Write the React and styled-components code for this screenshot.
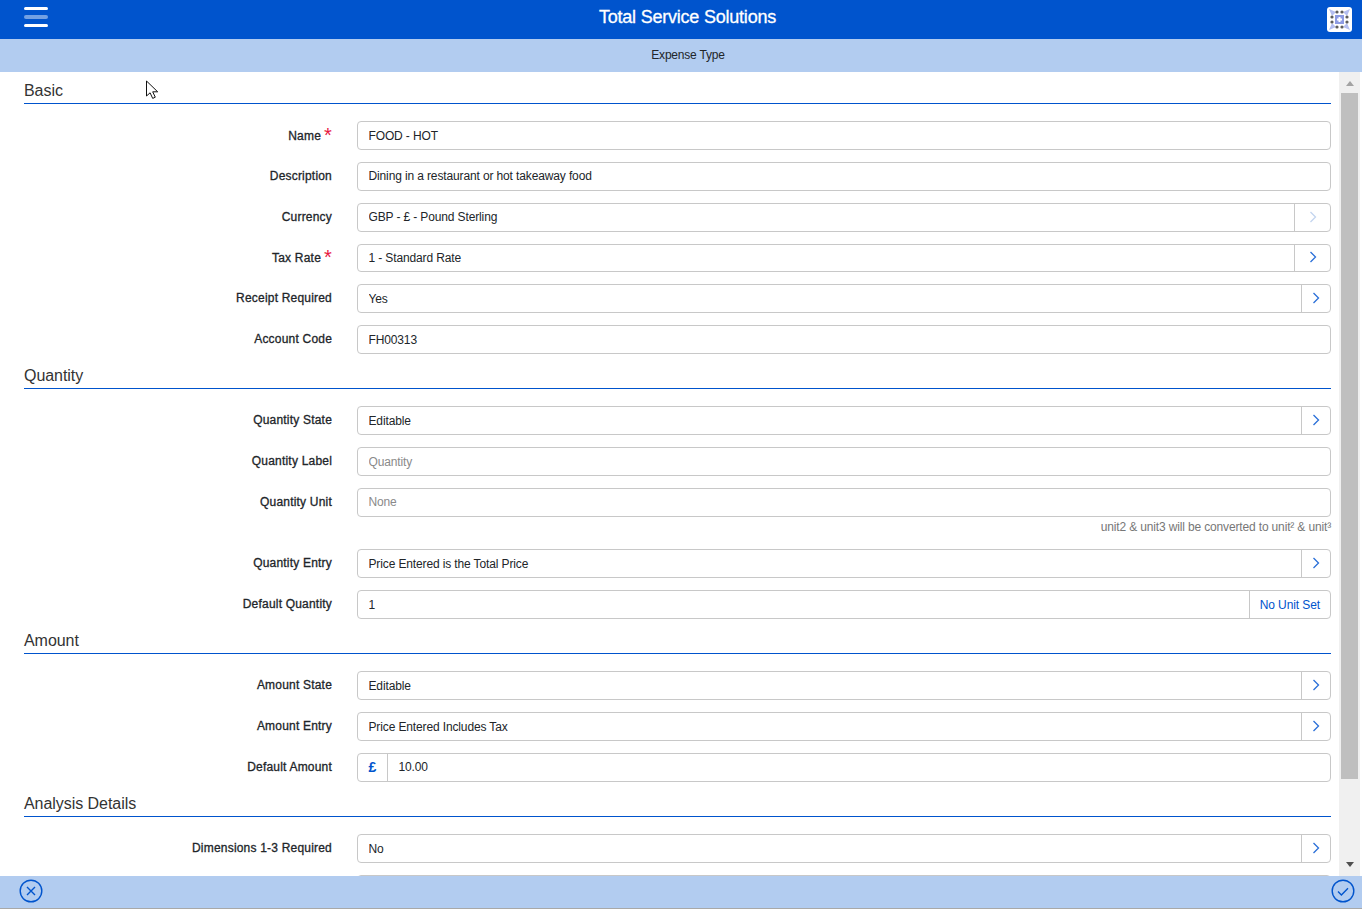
import React from 'react';
import styled, { createGlobalStyle } from 'styled-components';

const BLUE = '#0054cd';
const PALE = '#b2ccf0';

const GlobalStyle = createGlobalStyle`
  html, body {
    margin: 0;
    height: 100%;
    overflow: hidden;
    background: #fff;
  }
  body {
    font-family: "Liberation Sans", Arial, sans-serif;
    font-size: 12px;
    color: #212529;
  }
`;

const Page = styled.div`
  position: relative;
  display: flex;
  flex-direction: column;
  height: 910px;
  padding-bottom: 1px;
  box-sizing: border-box;
`;

const Header = styled.header`
  display: flex;
  align-items: center;
  flex: 0 0 39px;
  padding: 0 10px 5px 24px;
  box-sizing: border-box;
  background: ${BLUE};
`;

const Burger = styled.div`
  display: flex;
  flex-direction: column;
  gap: 5px;
  width: 24px;
`;

const BurgerBar = styled.span`
  height: 3.4px;
  border-radius: 2px;
  background: #fff;
  opacity: ${p => (p.$dim ? 0.45 : 1)};
`;

const Title = styled.h1`
  flex: 1;
  margin: 0;
  color: #fff;
  font-size: 18px;
  font-weight: 400;
  line-height: 34px;
  text-align: center;
  letter-spacing: -0.22px;
  -webkit-text-stroke: 0.3px #fff;
`;

const LogoBox = styled.div`
  display: flex;
  align-items: center;
  justify-content: center;
  width: 25px;
  height: 25px;
  margin-top: 5px;
  border-radius: 3px;
  background: #fff;
`;

const SubHeader = styled.div`
  flex: 0 0 33px;
  padding-left: 14px;
  background: ${PALE};
  font-size: 12px;
  line-height: 32px;
  text-align: center;
  letter-spacing: -0.2px;
`;

const Middle = styled.div`
  display: flex;
  flex: 1;
  min-height: 0;
`;

const Content = styled.main`
  flex: 1;
  min-width: 0;
  overflow: hidden;
  padding: 8.8px 8px 0 24px;
`;

const Scrollbar = styled.div`
  display: flex;
  flex-direction: column;
  align-items: center;
  flex: 0 0 21px;
  margin-right: 2px;
  background: #f0f0f0;
`;

const ScrollArrow = styled.div`
  flex: 0 0 0;
  width: 0;
  height: 0;
  margin-top: 9px;
  border-left: 4.5px solid transparent;
  border-right: 4.5px solid transparent;
  border-${p => (p.$down ? 'top' : 'bottom')}: 5px solid ${p => (p.$down ? '#505050' : '#a3a3a3')};
`;

const ScrollThumb = styled.div`
  width: 17px;
  height: 686px;
  margin-top: 7px;
  background: #bfbfbf;
`;

const ScrollRest = styled.div`
  flex: 1;
`;

const ScrollEnd = styled.div`
  flex: 0 0 9px;
`;

const Section = styled.section`
  margin-bottom: 12px;
`;

const SectionTitle = styled.h2`
  margin: 0 0 17.2px;
  padding-bottom: 1.5px;
  border-bottom: 1px solid ${BLUE};
  color: #333;
  font-size: 16px;
  font-weight: 400;
  line-height: 20.7px;
  letter-spacing: -0.05px;
`;

const Row = styled.div`
  display: grid;
  grid-template-columns: 308px 1fr;
  column-gap: 25px;
  margin-bottom: 12px;
`;

const Label = styled.label`
  display: flex;
  align-items: center;
  justify-content: flex-end;
  height: 28.8px;
  padding: ${p => (p.$required ? '1px 0 0' : '0 0 1px')};
  box-sizing: border-box;
  color: #212529;
  letter-spacing: 0.2px;
  -webkit-text-stroke: 0.3px #212529;
`;

const Star = styled.span`
  margin: -2px 0 0 3px;
  color: #e8173f;
  font-size: 20px;
  line-height: 16px;
  -webkit-text-stroke: 0;
`;

const InputGroup = styled.div`
  display: flex;
  height: 28.8px;
  box-sizing: border-box;
  border: 1px solid #c8c8c8;
  border-radius: 4px;
  background: #fff;
`;

const Input = styled.input`
  flex: 1;
  min-width: 0;
  padding: 0 10px 0 10.5px;
  border: 0;
  outline: 0;
  background: transparent;
  font: inherit;
  letter-spacing: -0.13px;
  color: #212529;
  &::placeholder {
    color: #8a8a8a;
    opacity: 1;
  }
`;

const Append = styled.div`
  display: flex;
  align-items: center;
  justify-content: center;
  flex: 0 0 ${p => p.$width || 29}px;
  box-sizing: border-box;
  border-left: 1px solid #c8c8c8;
  color: ${BLUE};
`;

const UnitButton = styled(Append)`
  flex: 0 0 auto;
  padding: 0 10px;
  letter-spacing: -0.1px;
`;

const ChevronIcon = styled.svg`
  margin-bottom: 1px;
`;

const CurrencyAddon = styled.div`
  display: flex;
  align-items: center;
  justify-content: center;
  flex: 0 0 29px;
  border-right: 1px solid #c8c8c8;
  color: ${BLUE};
  font-size: 14px;
  font-weight: 700;
`;

const Hint = styled.div`
  color: #777;
  line-height: 20.6px;
  text-align: right;
  letter-spacing: -0.15px;
`;

const Footer = styled.footer`
  display: flex;
  align-items: center;
  justify-content: space-between;
  flex: 0 0 33px;
  padding: 0 7px 2px 18.5px;
  box-sizing: border-box;
  border-bottom: 1px solid #a8a8a8;
  background: ${PALE};
`;

const Pointer = styled.svg`
  position: absolute;
  left: 145px;
  top: 80px;
`;

const Chevron = ({ muted }) => (
  <ChevronIcon width="8" height="12" viewBox="0 0 8 12" fill="none">
    <path d="M1.5 1l5 5-5 5" stroke={muted ? '#c3d5ef' : '#2a6fd8'} strokeWidth="1.3" />
  </ChevronIcon>
);

const Logo = () => {
  const dots = [
    [10, 5], [15, 5],
    [5, 10], [5, 15],
    [20, 10], [20, 15],
    [10, 20], [15, 20]
  ];
  return (
    <svg width="25" height="25" viewBox="0 0 25 25">
      <path d="M2 2l7 3-4 4zM23 2l-3 7-4-4zM2 23l3-7 4 4zM23 23l-7-3 4-4z" fill="#b4bef0" />
      <rect x="8" y="8" width="9" height="9" fill="#8d9be3" />
      <path d="M12.5 10v5M10 12.5h5" stroke="#fff" strokeWidth="2" />
      {dots.map(([x, y]) => <circle key={`${x}-${y}`} cx={x} cy={y} r="1.6" fill="#5c5c5c" />)}
    </svg>
  );
};

const RoundIcon = ({ children }) => (
  <svg width="24" height="24" viewBox="0 0 24 24" fill="none" stroke={BLUE} strokeWidth="1.4">
    <circle cx="12" cy="12" r="10.8" />
    {children}
  </svg>
);

const Field = ({ label, value, placeholder, required, select, muted, buttonWidth, unit, addon, hint }) => (
  <Row>
    <Label $required={required}>
      {label}
      {required && <Star>*</Star>}
    </Label>
    <div>
      <InputGroup>
        {addon && <CurrencyAddon>{addon}</CurrencyAddon>}
        <Input readOnly value={value || ''} placeholder={placeholder} />
        {select && <Append $width={buttonWidth}><Chevron muted={muted} /></Append>}
        {unit && <UnitButton>{unit}</UnitButton>}
      </InputGroup>
      {hint && <Hint>{hint}</Hint>}
    </div>
  </Row>
);

const App = () => {
  return (
    <Page>
      <GlobalStyle />
      <Header>
        <Burger>
          <BurgerBar />
          <BurgerBar $dim />
          <BurgerBar />
        </Burger>
        <Title>Total Service Solutions</Title>
        <LogoBox><Logo /></LogoBox>
      </Header>
      <SubHeader>Expense Type</SubHeader>
      <Middle>
        <Content>
          <Section>
            <SectionTitle>Basic</SectionTitle>
            <Field label="Name" required value="FOOD - HOT" />
            <Field label="Description" value="Dining in a restaurant or hot takeaway food" />
            <Field label="Currency" value="GBP - £ - Pound Sterling" select muted buttonWidth={36} />
            <Field label="Tax Rate" required value="1 - Standard Rate" select buttonWidth={36} />
            <Field label="Receipt Required" value="Yes" select />
            <Field label="Account Code" value="FH00313" />
          </Section>
          <Section>
            <SectionTitle>Quantity</SectionTitle>
            <Field label="Quantity State" value="Editable" select />
            <Field label="Quantity Label" placeholder="Quantity" />
            <Field
              label="Quantity Unit"
              placeholder="None"
              hint="unit2 & unit3 will be converted to unit² & unit³" />
            <Field label="Quantity Entry" value="Price Entered is the Total Price" select />
            <Field label="Default Quantity" value="1" unit="No Unit Set" />
          </Section>
          <Section>
            <SectionTitle>Amount</SectionTitle>
            <Field label="Amount State" value="Editable" select />
            <Field label="Amount Entry" value="Price Entered Includes Tax" select />
            <Field label="Default Amount" value="10.00" addon="£" />
          </Section>
          <Section>
            <SectionTitle>Analysis Details</SectionTitle>
            <Field label="Dimensions 1-3 Required" value="No" select />
            <Field label="" />
          </Section>
        </Content>
        <Scrollbar>
          <ScrollArrow />
          <ScrollThumb />
          <ScrollRest />
          <ScrollArrow $down />
          <ScrollEnd />
        </Scrollbar>
      </Middle>
      <Footer>
        <RoundIcon><path d="M8 8l8 8M16 8l-8 8" /></RoundIcon>
        <RoundIcon><path d="M7 12.5l3.4 3.4 6.6-6.6" /></RoundIcon>
      </Footer>
      <Pointer width="15" height="20" viewBox="0 0 15 20">
        <path d="M1.5 1v15l3.6-3.2 2.6 5.6 2.6-1.2-2.6-5.4h5z" fill="#fff" stroke="#111" strokeWidth="1" />
      </Pointer>
    </Page>
  );
};

export default App;
